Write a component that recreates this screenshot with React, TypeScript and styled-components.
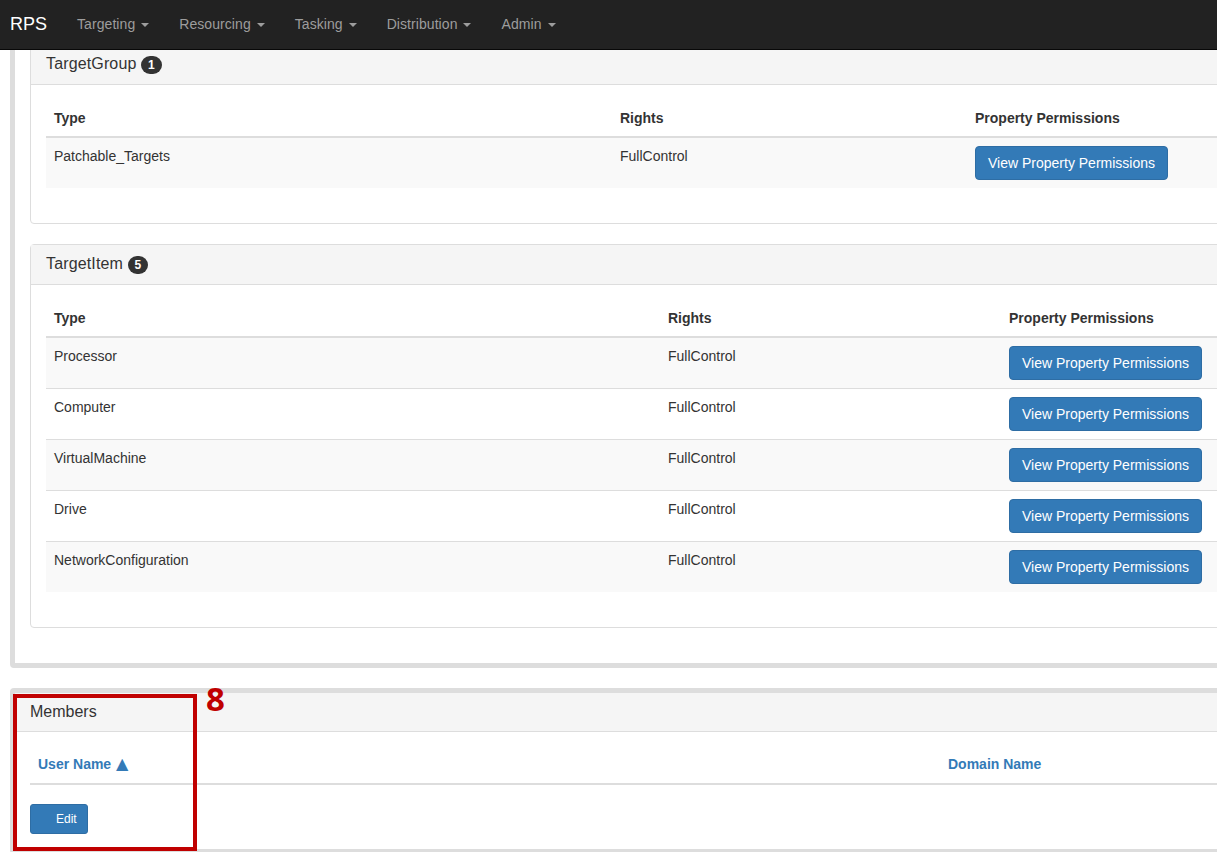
import styled, { createGlobalStyle } from 'styled-components'

const GlobalStyle = createGlobalStyle`
    html, body {
        margin: 0;
        padding: 0;
        background: #fff;
    }
    body {
        font-family: "Liberation Sans", Arial, sans-serif;
        font-size: 14px;
        line-height: 20px;
        color: #333;
    }
    * {
        box-sizing: border-box;
    }
`

const Viewport = styled.div`
    width: 1217px;
    height: 852px;
    overflow: hidden;
`

const Navbar = styled.nav`
    position: relative;
    z-index: 2;
    display: flex;
    align-items: center;
    height: 50px;
    padding-bottom: 2px;
    background: #222;
    border-bottom: 1px solid #080808;
`

const Brand = styled.a`
    padding: 0 15px 0 10px;
    font-size: 18px;
    color: #fff;
`

const NavItem = styled.a`
    padding: 0 15px;
    letter-spacing: 0.07px;
    color: #9d9d9d;
`

const Caret = styled.span`
    display: inline-block;
    width: 0;
    height: 0;
    margin-left: 2px;
    vertical-align: middle;
    border-top: 4px solid;
    border-right: 4px solid transparent;
    border-left: 4px solid transparent;
`

const Content = styled.main`
    width: 1300px;
    margin-top: -26px;
    padding-left: 10px;
`

const OuterPanel = styled.section`
    position: relative;
    margin-bottom: 20px;
    background: #fff;
    border: 5px solid #ddd;
    border-radius: 4px;
`

const OuterBody = styled.div`
    padding: 15px;
`

const Panel = styled.div`
    margin-bottom: 20px;
    background: #fff;
    border: 1px solid #ddd;
    border-radius: 4px;
`

const PanelHeading = styled.div<{ $withBadge?: boolean }>`
    height: ${(p) => (p.$withBadge ? 40 : 39)}px;
    padding: 9px 15px 0;
    font-size: 16px;
    line-height: 20px;
    letter-spacing: ${(p) => (p.$withBadge ? '0.14px' : '0')};
    color: #333;
    background: #f5f5f5;
    border-bottom: 1px solid #ddd;
`

const Badge = styled.span`
    display: inline-block;
    min-width: 10px;
    padding: 3px 7px;
    font-size: 12px;
    font-weight: 700;
    line-height: 1;
    letter-spacing: 0;
    color: #fff;
    vertical-align: middle;
    background: #333;
    border-radius: 10px;
`

const PanelBody = styled.div`
    padding: 15px;
`

const Table = styled.table`
    width: 100%;
    margin-bottom: 20px;
    table-layout: fixed;
    border-collapse: collapse;
    border-spacing: 0;
`

const Th = styled.th<{ $width?: number }>`
    width: ${(p) => (p.$width ? `${p.$width}px` : 'auto')};
    padding: 8px;
    font-weight: 700;
    text-align: left;
    border-bottom: 2px solid #ddd;
`

const SortLink = styled.a`
    position: relative;
    top: -1px;
    color: #337ab7;
`

const SortArrow = styled.span`
    margin-left: 1px;
    font-family: "DejaVu Sans", sans-serif;
    font-size: 16px;
`

const Row = styled.tr`
    &:nth-child(odd) {
        background: #f9f9f9;
    }
    & + & td {
        border-top: 1px solid #ddd;
    }
`

const Td = styled.td`
    padding: 8px;
    vertical-align: top;
`

const Button = styled.button`
    display: block;
    height: 34px;
    padding: 6px 12px;
    font-family: inherit;
    font-size: 14px;
    line-height: 20px;
    color: #fff;
    white-space: nowrap;
    background: #337ab7;
    border: 1px solid #2e6da4;
    border-radius: 4px;
`

const MembersBody = styled.div`
    padding: 15px;
`

const MembersTable = styled(Table)`
    margin-bottom: 19px;
`

const EditButton = styled.button`
    display: block;
    width: 58px;
    height: 30px;
    padding: 0 0 0 25px;
    font-family: inherit;
    font-size: 12px;
    line-height: 18px;
    color: #fff;
    text-align: left;
    background: #337ab7;
    border: 1px solid #2e6da4;
    border-radius: 3px;
`

const Callout = styled.div`
    position: absolute;
    top: 1px;
    left: -2px;
    width: 184px;
    height: 157px;
    border: 4px solid #c00000;
`

const CalloutNumber = styled.span`
    position: absolute;
    top: -21px;
    left: 189px;
    font-family: "Open Sans", sans-serif;
    font-size: 33px;
    font-weight: 700;
    line-height: 44px;
    color: #c00000;
`

const navItems = ['Targeting', 'Resourcing', 'Tasking', 'Distribution', 'Admin']

const targetItems = ['Processor', 'Computer', 'VirtualMachine', 'Drive', 'NetworkConfiguration']

const PermissionsTable = ({ rows, typeWidth, rightsWidth }: { rows: string[]; typeWidth: number; rightsWidth: number }) => (
    <Table>
        <thead>
            <tr>
                <Th $width={typeWidth}>Type</Th>
                <Th $width={rightsWidth}>Rights</Th>
                <Th>Property Permissions</Th>
            </tr>
        </thead>
        <tbody>
            {rows.map((name) => (
                <Row key={name}>
                    <Td>{name}</Td>
                    <Td>FullControl</Td>
                    <Td>
                        <Button>View Property Permissions</Button>
                    </Td>
                </Row>
            ))}
        </tbody>
    </Table>
)

const App = () => {
    return (
        <Viewport>
            <GlobalStyle />
            <Navbar>
                <Brand>RPS</Brand>
                {navItems.map((item) => (
                    <NavItem key={item}>
                        {item} <Caret />
                    </NavItem>
                ))}
            </Navbar>
            <Content>
                <OuterPanel>
                    <OuterBody>
                        <Panel>
                            <PanelHeading $withBadge>
                                TargetGroup <Badge>1</Badge>
                            </PanelHeading>
                            <PanelBody>
                                <PermissionsTable rows={['Patchable_Targets']} typeWidth={566} rightsWidth={355} />
                            </PanelBody>
                        </Panel>
                        <Panel>
                            <PanelHeading $withBadge>
                                TargetItem <Badge>5</Badge>
                            </PanelHeading>
                            <PanelBody>
                                <PermissionsTable rows={targetItems} typeWidth={614} rightsWidth={341} />
                            </PanelBody>
                        </Panel>
                    </OuterBody>
                </OuterPanel>
                <OuterPanel>
                    <PanelHeading>Members</PanelHeading>
                    <MembersBody>
                        <MembersTable>
                            <thead>
                                <tr>
                                    <Th $width={910}>
                                        <SortLink>
                                            User Name <SortArrow>▲</SortArrow>
                                        </SortLink>
                                    </Th>
                                    <Th>
                                        <SortLink>Domain Name</SortLink>
                                    </Th>
                                </tr>
                            </thead>
                        </MembersTable>
                        <EditButton>Edit</EditButton>
                    </MembersBody>
                    <Callout>
                        <CalloutNumber>8</CalloutNumber>
                    </Callout>
                </OuterPanel>
            </Content>
        </Viewport>
    )
}

export default App
